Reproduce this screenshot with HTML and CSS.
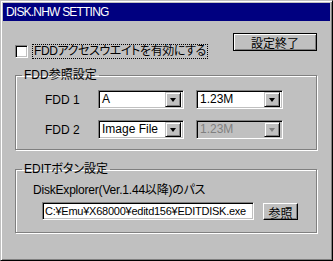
FILE: index.html
```html
<!DOCTYPE html>
<html lang="ja">
<head>
    <meta charset="UTF-8">
    <title>DISK.NHW SETTING</title>
    <link rel="stylesheet" href="styles.css">
</head>
<body>
    <!-- Ventana de configuración -->
    <div class="window">
        <div class="titlebar">DISK.NHW SETTING</div>
        <div class="content">
            <div class="top-row">
                <label class="check">
                    <span class="check-box"></span>
                    <span class="check-text">FDDアクセスウエイトを有効にする</span>
                </label>
                <button type="button" class="btn btn-default">設定終了</button>
            </div>

            <fieldset class="group">
                <legend>FDD参照設定</legend>
                <div class="fdd-grid">
                    <span class="fdd-label">FDD 1</span>
                    <div class="combo combo-drive">
                        <span class="combo-text">A</span>
                        <span class="combo-btn"><span class="arrow"></span></span>
                    </div>
                    <div class="combo combo-size">
                        <span class="combo-text">1.23M</span>
                        <span class="combo-btn"><span class="arrow"></span></span>
                    </div>

                    <span class="fdd-label">FDD 2</span>
                    <div class="combo combo-drive">
                        <span class="combo-text">Image File</span>
                        <span class="combo-btn"><span class="arrow"></span></span>
                    </div>
                    <div class="combo combo-size disabled">
                        <span class="combo-text">1.23M</span>
                        <span class="combo-btn"><span class="arrow"></span></span>
                    </div>
                </div>
            </fieldset>

            <fieldset class="group group-edit">
                <legend>EDITボタン設定</legend>
                <div class="edit-body">
                    <div class="path-label">DiskExplorer(Ver.1.44以降)のパス</div>
                    <div class="path-row">
                        <div class="field">C:¥Emu¥X68000¥editd156¥EDITDISK.exe</div>
                        <button type="button" class="btn btn-browse">参照</button>
                    </div>
                </div>
            </fieldset>
        </div>
    </div>
</body>
</html>
```

FILE: styles.css
```css
/* Estilos globais */
body {
    margin: 0;
    font-family: "Liberation Sans", "Noto Sans CJK JP", sans-serif;
    font-size: 12px;
    font-feature-settings: "palt";
    color: #000;
    background-color: #c0c0c0;
}

/* Janela */
.window {
    width: 333px;
    height: 261px;
    box-sizing: border-box;
    padding: 2px;
    border: 1px solid;
    border-color: #c0c0c0 #000 #000 #c0c0c0;
    box-shadow: inset 1px 1px 0 #fff, inset -1px -1px 0 #808080;
    background-color: #c0c0c0;
}

.titlebar {
    height: 18px;
    line-height: 18px;
    padding-left: 3px;
    letter-spacing: -0.8px;
    background-color: #000080;
    color: #fff;
}

.content {
    padding: 12px 12px 0 12px;
}

/* Linha superior: checkbox + botão */
.top-row {
    display: flex;
    justify-content: space-between;
    align-items: flex-start;
    height: 26px;
}

.check {
    display: flex;
    align-items: center;
    margin-top: 11px;
}

.check-box {
    width: 13px;
    height: 13px;
    box-sizing: border-box;
    border: 1px solid;
    border-color: #808080 #fff #fff #808080;
    box-shadow: inset 1px 1px 0 #000, inset -1px -1px 0 #c0c0c0;
    background-color: #fff;
}

.check-text {
    margin-left: 4px;
    padding: 0 1px;
    line-height: 13px;
    letter-spacing: -0.4px;
    border: 1px dotted #000;
}

/* Botões */
.btn {
    font: inherit;
    color: #000;
    background-color: #c0c0c0;
    padding: 0;
    box-sizing: border-box;
    border: 1px solid;
    border-color: #fff #000 #000 #fff;
    box-shadow: inset -1px -1px 0 #808080;
}

.btn-default {
    width: 84px;
    height: 18px;
    margin-right: 1px;
    border-color: #000;
    box-shadow: inset 1px 1px 0 #fff, inset -1px -1px 0 #808080;
}

.btn-browse {
    width: 35px;
    height: 17px;
    margin-top: 1px;
}

/* Caixas de grupo */
.group {
    width: 302px;
    box-sizing: border-box;
    margin: 9px 0 0 0;
    padding: 0;
    border: 1px solid #808080;
    box-shadow: inset 1px 1px 0 #fff, 1px 1px 0 #fff;
}

.group legend {
    margin-left: 6px;
    padding: 0 2px;
    line-height: 14px;
}

.group-edit {
    margin-top: 12px;
}

/* Grade das unidades FDD */
.fdd-grid {
    display: grid;
    grid-template-columns: 41px 86px 87px;
    column-gap: 12px;
    row-gap: 11px;
    align-items: center;
    padding: 8px 0 10px 29px;
}

.combo {
    display: flex;
    align-items: center;
    justify-content: space-between;
    height: 19px;
    box-sizing: border-box;
    padding: 2px;
    border: 1px solid;
    border-color: #808080 #fff #fff #808080;
    box-shadow: inset 1px 1px 0 #000, inset -1px -1px 0 #c0c0c0;
    background-color: #fff;
}

.combo-text {
    padding-left: 1px;
    line-height: 15px;
}

.combo-btn {
    display: flex;
    align-items: center;
    justify-content: center;
    width: 16px;
    height: 15px;
    box-sizing: border-box;
    border: 1px solid;
    border-color: #c0c0c0 #000 #000 #c0c0c0;
    box-shadow: inset 1px 1px 0 #fff, inset -1px -1px 0 #808080;
    background-color: #c0c0c0;
}

.arrow {
    width: 0;
    height: 0;
    border-left: 3.5px solid transparent;
    border-right: 3.5px solid transparent;
    border-top: 4px solid #000;
}

.combo.disabled {
    background-color: #c0c0c0;
}

.combo.disabled .combo-text {
    color: #808080;
}

.combo.disabled .arrow {
    border-top-color: #808080;
}

/* Caminho do EDITDISK */
.edit-body {
    padding: 7px 0 12px 17px;
}

.path-label {
    line-height: 14px;
    letter-spacing: -0.2px;
}

.path-row {
    display: flex;
    align-items: flex-start;
    gap: 9px;
    margin: 5px 0 0 9px;
}

.field {
    width: 212px;
    height: 18px;
    box-sizing: border-box;
    padding: 0 2px;
    font-size: 11px;
    line-height: 16px;
    letter-spacing: -0.25px;
    white-space: nowrap;
    overflow: hidden;
    border: 1px solid;
    border-color: #808080 #fff #fff #808080;
    box-shadow: inset 1px 1px 0 #000, inset -1px -1px 0 #c0c0c0;
    background-color: #fff;
}
```
